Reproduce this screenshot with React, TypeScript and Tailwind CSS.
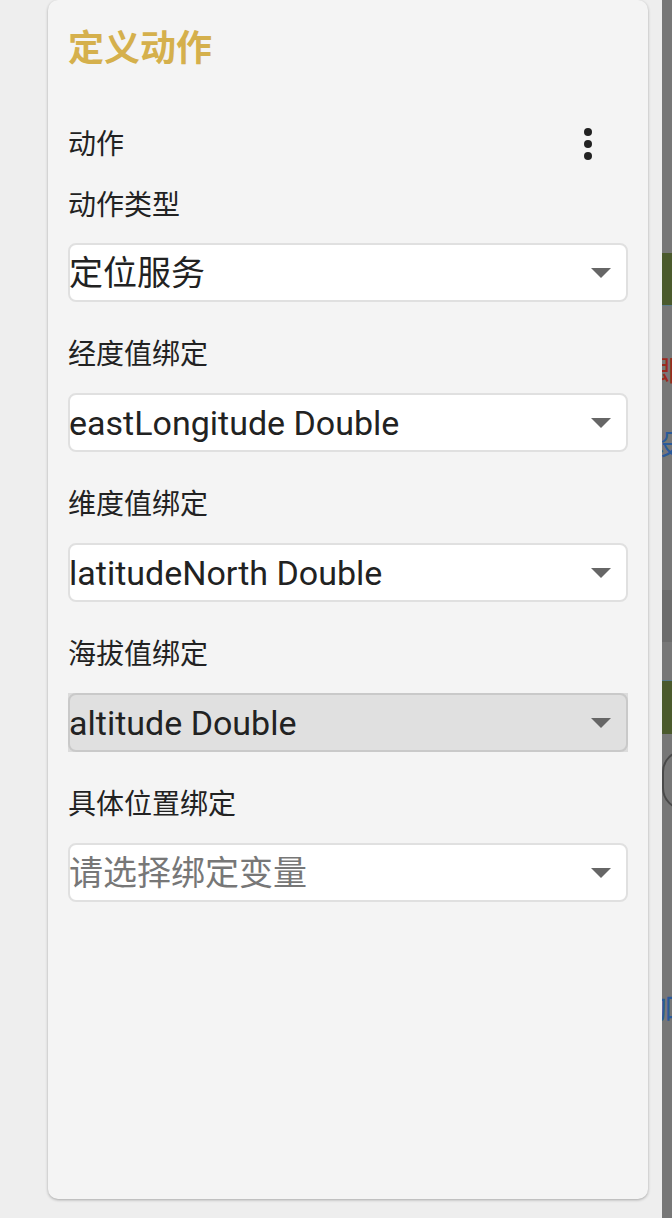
import React from 'react'

const fields = [
  { label: '经度值绑定', value: 'eastLongitude Double' },
  { label: '维度值绑定', value: 'latitudeNorth Double' },
  { label: '海拔值绑定', value: 'altitude Double', active: true },
  { label: '具体位置绑定', value: '请选择绑定变量', placeholder: true },
]

function Arrow() {
  return (
    <svg width="20" height="10" viewBox="0 0 20 10" className="shrink-0">
      <path d="M0 0 H20 L10 10 Z" fill="#666" />
    </svg>
  )
}

function SelectBox({ value, active, placeholder }: { value: string; active?: boolean; placeholder?: boolean }) {
  return (
    <div className={active ? 'bg-[#dcdcdc]' : ''}>
      <div
        className={
          'h-[59px] flex items-center justify-between pr-[15px] rounded-[8px] border-2 ' +
          (active ? 'bg-[#e0e0e0] border-[#c9c9c9]' : 'bg-white border-[#e0e0e0]')
        }
      >
        <span className={'text-[34px] leading-none -ml-[1px] ' + (placeholder ? 'text-[#777]' : 'text-[#222]')}>
          {value}
        </span>
        <Arrow />
      </div>
    </div>
  )
}

export default function App() {
  return (
    <div
      className="flex h-[1218px] bg-[#eeeeee] overflow-hidden"
      style={{ fontFamily: 'Roboto, "Noto Sans CJK SC", sans-serif' }}
    >
      <div className="w-[48px] shrink-0" />
      <div className="w-[600px] h-[1199px] shrink-0 bg-[#f4f4f4] rounded-[10px] shadow-[0_1px_3px_rgba(0,0,0,0.3)] px-[20px]">
        <h1 className="pt-[26px] text-[36px] leading-[46px] font-bold text-[#d5b04c]">定义动作</h1>
        <div className="mt-[53px] flex items-center justify-between h-[40px]">
          <span className="text-[28px] text-[#222]">动作</span>
          <svg width="10" height="34" viewBox="0 0 10 34" className="mr-[35px]">
            <circle cx="5" cy="4" r="4" fill="#222" />
            <circle cx="5" cy="16" r="4" fill="#222" />
            <circle cx="5" cy="28" r="4" fill="#222" />
          </svg>
        </div>
        <div className="mt-[21px] h-[40px] flex items-center text-[28px] text-[#222]">动作类型</div>
        <div className="mt-[17px]">
          <SelectBox value="定位服务" />
        </div>
        {fields.map((f) => (
          <div key={f.label}>
            <div className="mt-[33px] h-[40px] flex items-center text-[28px] text-[#222]">{f.label}</div>
            <div className="mt-[18px]">
              <SelectBox value={f.value} active={f.active} placeholder={f.placeholder} />
            </div>
          </div>
        ))}
      </div>
      <div className="w-[14px] shrink-0" />
      <div className="flex-1 bg-[#777] flex flex-col overflow-hidden">
        <div className="mt-[253px] h-[53px] bg-[#4b5a2d] border-b border-[#5a7a8a]" />
        <div className="mt-[50px] text-[28px] leading-[32px] text-[#9b2a1e] -ml-[8px]">即</div>
        <div className="mt-[42px] text-[28px] leading-[32px] text-[#2a5a9a] -ml-[10px]">设</div>
        <div className="mt-[128px] h-[52px] bg-[#6c6c6c]" />
        <div className="mt-[38px] h-[54px] bg-[#4b5a2d] border-t border-[#5a7a8a]" />
        <div className="mt-[16px] h-[60px] w-[44px] rounded-full border-2 border-[#4a4a4a]" />
        <div className="mt-[178px] text-[30px] leading-[40px] text-[#2a5a9a] -ml-[12px]">加</div>
      </div>
    </div>
  )
}
